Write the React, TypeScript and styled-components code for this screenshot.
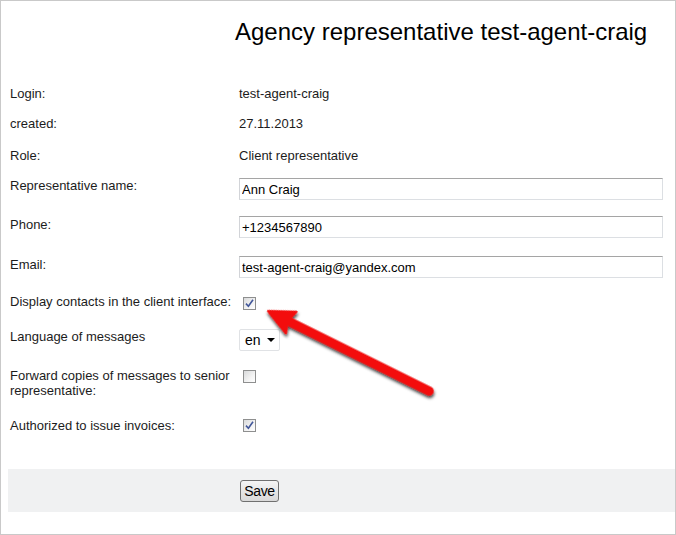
import styled, { createGlobalStyle } from 'styled-components'

const GlobalStyle = createGlobalStyle`
  html, body {
    margin: 0;
    padding: 0;
    background: #fff;
  }
  body {
    font-family: 'Liberation Sans', Arial, sans-serif;
    font-size: 13px;
    color: #1c1c1c;
  }
`

const Frame = styled.div`
  position: relative;
  box-sizing: border-box;
  width: 676px;
  height: 535px;
  border: 1px solid #c9c9c9;
  padding-left: 7px;
  overflow: hidden;
`

const Title = styled.h1`
  box-sizing: border-box;
  height: 77px;
  margin: 0;
  padding: 17px 0 0 227px;
  font-size: 24px;
  font-weight: normal;
  line-height: 28px;
  color: #000;
`

const Row = styled.div<{ $h: number; $pt: number }>`
  display: grid;
  grid-template-columns: 231px 1fr;
  align-items: start;
  box-sizing: border-box;
  height: ${(p) => p.$h}px;
  padding-top: ${(p) => p.$pt}px;
`

const Label = styled.div<{ $top?: number; $nowrap?: boolean }>`
  padding: ${(p) => p.$top ?? 0}px 4px 0 2px;
  line-height: 15px;
  white-space: ${(p) => (p.$nowrap ? 'nowrap' : 'normal')};
`

const Value = styled.div`
  line-height: 15px;
`

const TextInput = styled.input`
  box-sizing: border-box;
  width: 424px;
  height: 22px;
  margin: 0;
  padding: 0 2px;
  border: 1px solid #dcdfe3;
  border-top-color: #a5a5a5;
  border-left-color: #d2d4d8;
  font-family: 'Liberation Sans', Arial, sans-serif;
  font-size: 13px;
  color: #000;
  outline: none;
`

const Box = styled.span<{ $mt: number }>`
  display: inline-flex;
  align-items: center;
  justify-content: center;
  box-sizing: border-box;
  width: 13px;
  height: 13px;
  margin: ${(p) => p.$mt}px 0 0 4px;
  border: 1px solid #8e8f8f;
  background: linear-gradient(135deg, #d9dadb 0%, #f3f3f3 60%, #ffffff 100%);
`

const Checkbox = ({ checked, mt }: { checked?: boolean; mt: number }) => (
  <Box $mt={mt}>
    {checked && (
      <svg width="9" height="9" viewBox="0 0 9 9">
        <path d="M1 4.6 L3.4 7.2 L8 0.8" fill="none" stroke="#42579a" strokeWidth="1.6" />
      </svg>
    )}
  </Box>
)

const SelectBox = styled.div`
  display: flex;
  align-items: center;
  justify-content: space-between;
  box-sizing: border-box;
  width: 41px;
  height: 22px;
  padding: 0 4px 0 5px;
  border: 1px solid #e0e2e5;
  border-radius: 2px;
  font-size: 14px;
  color: #000;
`

const Bar = styled.div`
  box-sizing: border-box;
  height: 43px;
  margin-top: 19px;
  padding: 11px 0 0 232px;
  background: #f0f1f2;
`

const SaveButton = styled.button`
  box-sizing: border-box;
  width: 39px;
  height: 22px;
  padding: 0;
  border: 1px solid #707070;
  border-radius: 3px;
  background: linear-gradient(#f5f5f5, #e6e6e6 50%, #d9d9d9);
  font-family: 'Liberation Sans', Arial, sans-serif;
  font-size: 14px;
  letter-spacing: -0.3px;
  color: #000;
`

const Overlay = styled.svg`
  position: absolute;
  left: -1px;
  top: -1px;
  pointer-events: none;
`

const Arrow = () => (
  <Overlay width="676" height="535" viewBox="0 0 676 535">
    <defs>
      <filter id="sh" x="-20%" y="-20%" width="140%" height="140%">
        <feDropShadow dx="1.5" dy="2" stdDeviation="1.4" floodColor="#000" floodOpacity="0.75" />
      </filter>
    </defs>
    <g transform="translate(268 311) rotate(26.4)" filter="url(#sh)">
      <line x1="20" y1="0" x2="180" y2="0" stroke="#f30d0d" strokeWidth="9" strokeLinecap="round" />
      <polygon points="0,0 26,-12 22,0 26,12" fill="#f30d0d" stroke="#f30d0d" strokeWidth="2" strokeLinejoin="round" />
    </g>
  </Overlay>
)

export default function App() {
  return (
    <>
      <GlobalStyle />
      <Frame>
        <Title>Agency representative test-agent-craig</Title>
        <Row $h={30} $pt={8}>
          <Label>Login:</Label>
          <Value>test-agent-craig</Value>
        </Row>
        <Row $h={31} $pt={8}>
          <Label>created:</Label>
          <Value>27.11.2013</Value>
        </Row>
        <Row $h={30} $pt={9}>
          <Label>Role:</Label>
          <Value>Client representative</Value>
        </Row>
        <Row $h={39} $pt={9}>
          <Label $top={0}>Representative name:</Label>
          <TextInput defaultValue="Ann Craig" />
        </Row>
        <Row $h={39} $pt={8}>
          <Label $top={1}>Phone:</Label>
          <TextInput defaultValue="+1234567890" />
        </Row>
        <Row $h={40} $pt={9}>
          <Label $top={1}>Email:</Label>
          <TextInput defaultValue="test-agent-craig@yandex.com" />
        </Row>
        <Row $h={31} $pt={7}>
          <Label $nowrap>Display contacts in the client interface:</Label>
          <div>
            <Checkbox checked mt={3} />
          </div>
        </Row>
        <Row $h={43} $pt={11}>
          <Label>Language of messages</Label>
          <SelectBox>
            <span>en</span>
            <svg width="8" height="4" viewBox="0 0 8 4">
              <polygon points="0,0 8,0 4,4" fill="#000" />
            </svg>
          </SelectBox>
        </Row>
        <Row $h={49} $pt={7}>
          <Label>Forward copies of messages to senior representative:</Label>
          <div>
            <Checkbox mt={2} />
          </div>
        </Row>
        <Row $h={40} $pt={8}>
          <Label>Authorized to issue invoices:</Label>
          <div>
            <Checkbox checked mt={1} />
          </div>
        </Row>
        <Bar>
          <SaveButton>Save</SaveButton>
        </Bar>
        <Arrow />
      </Frame>
    </>
  )
}
